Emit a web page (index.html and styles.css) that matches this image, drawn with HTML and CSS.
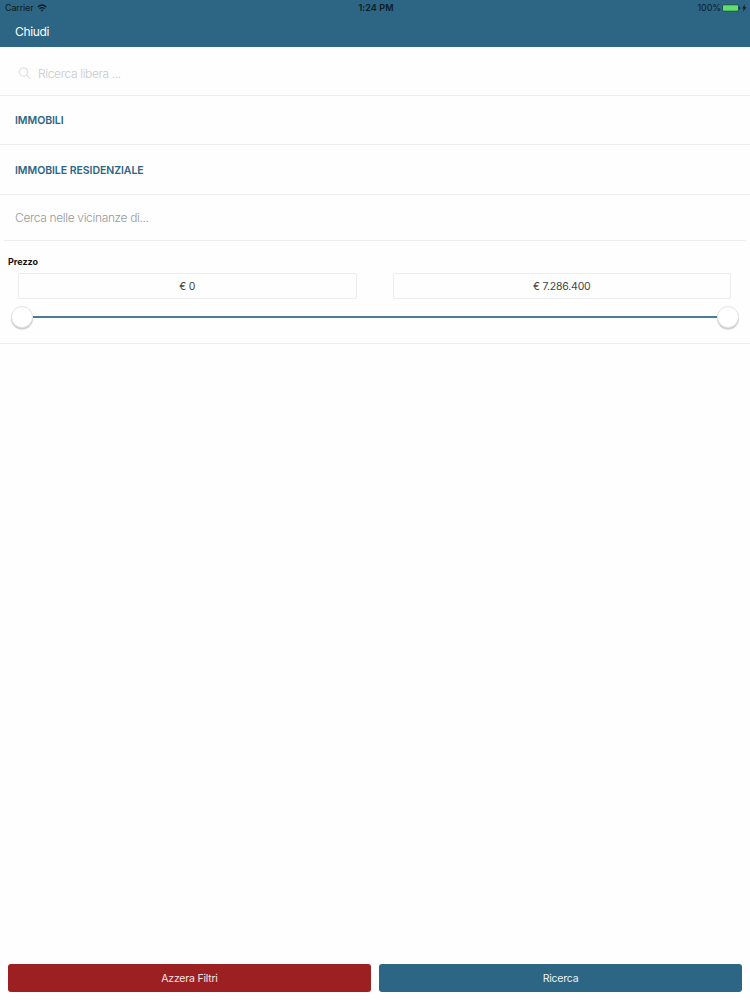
FILE: index.html
```html
<!DOCTYPE html>
<html lang="it">
<head>
    <meta charset="UTF-8">
    <meta name="viewport" content="width=device-width, initial-scale=1.0">
    <title>Ricerca</title>
    <link rel="stylesheet" href="styles.css">
</head>
<body>

    <header class="header">
        <div class="status-bar">
            <div class="carrier">
                <span>Carrier</span>
                <svg class="wifi" viewBox="0 0 10 8" width="10" height="8">
                    <path d="M0.8 3 Q5 -0.9 9.2 3" />
                    <path d="M2.5 4.7 Q5 2.5 7.5 4.7" />
                    <path class="wifi-dot" d="M3.7 6 Q5 4.9 6.3 6 L5 7.4 Z" />
                </svg>
            </div>
            <div class="clock">1:24 PM</div>
            <div class="power">
                <span>100%</span>
                <svg class="battery" viewBox="0 0 25 8" width="25" height="8">
                    <rect class="battery-level" x="0.5" y="0.8" width="16" height="6.4" rx="1.2" />
                    <path class="battery-tip" d="M17.2 2.4 Q19.2 4 17.2 5.6 Z" />
                    <path class="bolt" d="M23 0.6 L20 4.5 H21.8 L21 7.4 L24.6 3.3 H22.6 Z" />
                </svg>
            </div>
        </div>
        <button class="close">Chiudi</button>
    </header>

    <main class="filters">
        <label class="row search">
            <svg class="search-icon" viewBox="0 0 14 14" width="14" height="14">
                <circle cx="5.5" cy="6" r="4.2" />
                <path d="M8.7 9.2 L12.6 12.9" />
            </svg>
            <input class="field" type="text" placeholder="Ricerca libera ...">
        </label>
        <div class="row category">IMMOBILI</div>
        <div class="row category">IMMOBILE RESIDENZIALE</div>
        <div class="row nearby">
            <input class="field" type="text" placeholder="Cerca nelle vicinanze di...">
        </div>
        <section class="price">
            <h2 class="price-title">Prezzo</h2>
            <div class="price-values">
                <div class="price-box">€ 0</div>
                <div class="price-box">€ 7.286.400</div>
            </div>
            <div class="slider">
                <span class="knob"></span>
                <span class="track"></span>
                <span class="knob"></span>
            </div>
        </section>
    </main>

    <footer class="actions">
        <button class="reset">Azzera Filtri</button>
        <button class="submit">Ricerca</button>
    </footer>

</body>
</html>
```
FILE: styles.css
```css
* {
    margin: 0;
    padding: 0;
    box-sizing: border-box;
}

body {
    display: flex;
    flex-direction: column;
    height: 100vh;
    background: #fefefe;
    font-family: Inter, Roboto, sans-serif;
}

button {
    border: none;
    font-family: inherit;
    color: white;
    cursor: pointer;
}

/* Header */
.header {
    height: 47px;
    background: #2d6584;
}

.status-bar {
    display: grid;
    grid-template-columns: 1fr auto 1fr;
    align-items: center;
    height: 15px;
    padding: 0 3px 0 5px;
    font-size: 9px;
    color: #0b1c26;
}

.carrier,
.power {
    display: flex;
    align-items: center;
    gap: 3px;
}

.carrier {
    gap: 4px;
    letter-spacing: -0.15px;
}

.power {
    justify-content: flex-end;
    gap: 1px;
    letter-spacing: -0.1px;
}

.clock {
    font-weight: 600;
    letter-spacing: 0.1px;
}

.wifi {
    fill: none;
    stroke: #0b1c26;
    stroke-width: 1.3;
}

.wifi-dot {
    fill: #0b1c26;
    stroke: none;
}

.battery-level {
    fill: #5fe06e;
    stroke: #12303f;
    stroke-width: 0.7;
}

.battery-tip,
.bolt {
    fill: #0b1c26;
}

.close {
    display: block;
    height: 32px;
    padding: 0 15px;
    background: none;
    font-size: 12px;
    letter-spacing: -0.35px;
}

/* Filter rows */
.row {
    display: flex;
    align-items: center;
    padding: 0 15px;
    border-bottom: 1px solid #eeeef0;
}

.search {
    height: 49px;
    padding: 4px 18px 0;
    gap: 6px;
}

.search-icon {
    fill: none;
    stroke: #e2e2e4;
    stroke-width: 1.3;
}

.field {
    flex: 1;
    border: none;
    outline: none;
    background: none;
    font-family: inherit;
    font-size: 12px;
    font-weight: 300;
    letter-spacing: -0.35px;
}

.field::placeholder {
    color: #98989c;
}

.search .field::placeholder {
    color: #c9c9cd;
}

.category {
    height: 49px;
    font-size: 10.5px;
    font-weight: 600;
    letter-spacing: -0.05px;
    color: #2d6584;
}

.category + .category {
    height: 50px;
    padding-top: 1px;
}

.nearby {
    height: 46px;
    margin: 0 4px;
    padding: 0 11px;
}

/* Price range */
.price {
    height: 103px;
    padding: 14px 8px 0;
    border-bottom: 1px solid #eeeef0;
}

.price-title {
    font-size: 9px;
    font-weight: 700;
    line-height: 13px;
    color: #111;
}

.price-values {
    display: flex;
    gap: 36px;
    margin: 5px 11px 0 10px;
}

.price-box {
    flex: 1;
    height: 26px;
    border: 1px solid #ececf0;
    border-radius: 2px;
    font-size: 10.5px;
    line-height: 26px;
    letter-spacing: -0.2px;
    text-align: center;
    color: #444;
}

.slider {
    display: flex;
    align-items: center;
    margin: 7px 3px 0;
}

.knob {
    width: 22px;
    height: 22px;
    border: 1px solid #e4e4e4;
    border-radius: 50%;
    background: white;
    box-shadow: 0 1.5px 1px rgba(0, 0, 0, 0.2);
}

.track {
    flex: 1;
    height: 2px;
    background: #4b7b95;
}

/* Bottom buttons */
.actions {
    display: flex;
    gap: 8px;
    margin-top: auto;
    padding: 0 8px 8px;
}

.actions button {
    flex: 1;
    height: 28px;
    border-radius: 3px;
    font-size: 10.5px;
    letter-spacing: -0.22px;
}

.actions .reset {
    background: #9c1f22;
    color: #f8e4e2;
}

.actions .submit {
    background: #2d6584;
    color: #e8f3f9;
}
```
